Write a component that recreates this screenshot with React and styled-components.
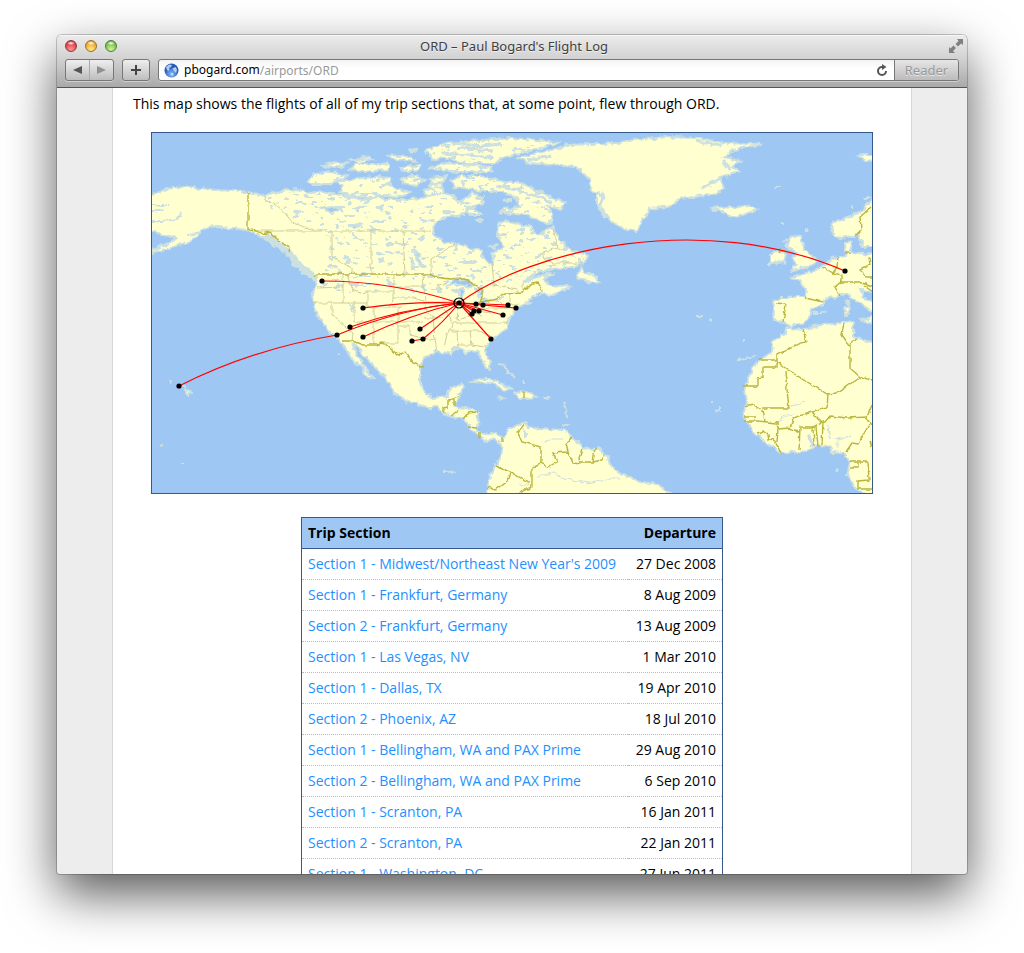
import React from "react";
import styled, { createGlobalStyle } from "styled-components";

const GlobalStyle = createGlobalStyle`
  *, *::before, *::after { box-sizing: border-box; }
  body { margin: 0; background: #fff; overflow: hidden; }
`;

const UI_FONT = `"Noto Sans", "Open Sans", sans-serif`;
const TEXT_FONT = `"Open Sans", "Noto Sans", sans-serif`;

const Desktop = styled.div`
  height: 100vh;
  padding: 35px 57px 79px;
`;

const Window = styled.div`
  display: flex;
  flex-direction: column;
  height: 100%;
  border-radius: 5px 5px 3px 3px;
  overflow: hidden;
  background: #ededed;
  box-shadow: 0 0 0 1px rgba(0, 0, 0, 0.2), 0 20px 50px rgba(0, 0, 0, 0.66);
`;

const Chrome = styled.header`
  flex: none;
  background: linear-gradient(#ececec, #d2d2d2 45%, #a9a9a9);
  border-bottom: 1px solid #555;
  box-shadow: inset 0 1px 0 #f6f6f6;
  font-family: ${UI_FONT};
`;

const TitleBar = styled.div`
  display: grid;
  grid-template-columns: 80px 1fr 80px;
  align-items: center;
  height: 22px;
  padding: 0 4px 0 8px;
`;

const Lights = styled.div`
  display: flex;
  gap: 8px;
`;

const Light = styled.button`
  width: 12px;
  height: 12px;
  padding: 0;
  border: 1px solid ${(p) => p.$edge};
  border-radius: 50%;
  background: radial-gradient(ellipse 4px 2px at 50% 22%, #fff, transparent),
    radial-gradient(circle at 50% 85%, ${(p) => p.$glow}, ${(p) => p.$tone} 75%);
`;

const Title = styled.h1`
  margin: 0;
  text-align: center;
  font-size: 13px;
  line-height: 22px;
  font-weight: 400;
  color: #404040;
  text-shadow: 0 1px 0 rgba(255, 255, 255, 0.6);
`;

const IconButton = styled.button`
  display: flex;
  align-items: center;
  justify-content: center;
  justify-self: end;
  padding: 0;
  border: 0;
  background: none;
`;

const Toolbar = styled.div`
  display: flex;
  gap: 8px;
  height: 30px;
  padding: 2px 8px 6px;
`;

const ButtonGroup = styled.div`
  display: flex;
  width: 49px;
  border: 1px solid #777;
  border-radius: 3px;
  background: linear-gradient(#efefef, #bdbdbd);
  box-shadow: 0 1px 0 rgba(255, 255, 255, 0.4);
`;

const ToolButton = styled.button`
  flex: 1;
  display: flex;
  align-items: center;
  justify-content: center;
  padding: 0;
  border: 0;
  background: none;
  & + & { border-left: 1px solid #aaa; }
`;

const AddGroup = styled(ButtonGroup)`
  width: 28px;
`;

const AddressBar = styled.form`
  flex: 1;
  display: flex;
  align-items: center;
  margin: 0;
  padding-left: 5px;
  border: 1px solid #777;
  border-radius: 3px;
  background: linear-gradient(#f3f3f3, #fff 40%);
  box-shadow: 0 1px 0 rgba(255, 255, 255, 0.4);
  overflow: hidden;
  font-size: 12px;
`;

const Host = styled.label`
  margin-left: 5px;
  line-height: 20px;
  color: #000;
`;

const PathInput = styled.input`
  flex: 1;
  min-width: 0;
  height: 20px;
  padding: 0;
  border: 0;
  outline: 0;
  background: none;
  font: inherit;
  color: #999;
`;

const ReaderButton = styled.button`
  align-self: stretch;
  width: 64px;
  margin-left: 6px;
  padding: 0;
  border: 0;
  border-left: 1px solid #777;
  background: linear-gradient(#e6e6e6, #bcbcbc);
  font-family: inherit;
  font-size: 13px;
  line-height: 18px;
  color: #999;
  text-shadow: 0 1px 0 rgba(255, 255, 255, 0.6);
`;

const Viewport = styled.main`
  flex: 1;
  min-height: 0;
  overflow: hidden;
`;

const Page = styled.div`
  max-width: 800px;
  margin: 0 auto;
  padding: 4px 20px;
  border: solid #d8d8d8;
  border-width: 0 1px;
  background: #fff;
  font-family: ${TEXT_FONT};
  font-size: 14px;
  line-height: 24px;
  color: #000;
`;

const Intro = styled.p`
  margin: 0 0 16px;
`;

const MapFrame = styled.figure`
  max-width: 722px;
  margin: 0 auto 23px;
  border: 1px solid #36598c;
  background: #9fc7f3;
  svg { display: block; width: 100%; height: auto; }
`;

const Trips = styled.table`
  width: 422px;
  margin: 0 auto;
  border: 1px solid #36598c;
  border-collapse: separate;
  border-spacing: 0;
`;

const HeadCell = styled.th`
  height: 31px;
  padding: 0 6px;
  border-bottom: 1px solid #36598c;
  background: #9fc7f3;
  text-align: ${(p) => (p.$end ? "right" : "left")};
  font-weight: 700;
`;

const Cell = styled.td`
  height: 31px;
  padding: 0 6px;
  border-bottom: 1px dotted #bbb;
  text-align: ${(p) => (p.$end ? "right" : "left")};
  white-space: nowrap;
`;

const TripLink = styled.a`
  color: #1e90ff;
  text-decoration: none;
`;

const MAINLAND =
  "M-4 63L8 58L20 55L33 53L48 56L81 58L96 60L113 63L121 59L145 56L158 60L168 59L195 63L211 67L228 65L248 67L271 65L283 60L278 52L288 50L291 60L300 62L308 70L321 60L331 64L331 72L315 75L311 82L295 84L283 90L281 99L291 109L303 110L318 115L330 118L331 125L336 130L341 132L342 124L340 120L350 115L351 110L346 104L347 90L356 88L371 92L380 94L381 100L388 102L395 97L400 94L408 107L415 115L428 120L435 123L431 130L421 134L401 136L388 139L380 144L371 150L383 145L395 140L401 141L391 147L401 154L415 152L418 154L398 163L390 159L380 164L375 169L378 170L365 174L360 182L356 187L356 195L348 200L340 207L333 214L334 222L338 229L338 237L334 235L330 227L326 219L320 218L313 219L308 216L300 216L300 221L285 218L271 225L268 235L268 250L275 262L281 265L295 263L300 253L311 252L310 259L306 264L303 274L315 275L326 279L325 297L331 302L345 300L351 305L356 297L373 289L376 294L388 296L410 297L415 299L421 305L430 314L448 317L456 324L458 332L468 340L488 349L501 350L518 360L518 366L335 366L336 347L343 334L350 320L349 309L341 305L335 309L328 304L318 295L316 290L310 285L300 283L291 280L285 274L275 274L258 269L241 260L238 252L231 242L221 232L211 222L206 214L200 210L205 222L211 232L221 245L215 244L210 234L200 227L193 214L188 207L178 200L168 185L162 174L161 160L165 150L163 144L151 140L145 130L138 120L126 114L115 105L105 101L95 97L71 94L51 95L46 102L35 109L18 115L-4 121L-4 119L18 110L25 105L13 102L-4 97Z";

const ARCTIC = [
  "M156 49L163 40L178 39L195 43L185 49L175 52L161 52Z",
  "M183 47L198 47L211 45L225 44L238 45L241 55L258 59L248 64L235 62L215 65L198 62L188 59L190 54Z",
  "M168 33L185 29L195 30L188 34ZM198 37L205 30L225 32L236 30L236 37L211 39ZM198 27L218 24L221 26L205 29Z",
  "M248 47L261 42L273 47L265 52L253 51ZM278 45L295 43L291 49L280 50ZM271 57L288 54L290 60L275 64Z",
  "M236 22L258 24L265 29L242 27ZM248 34L268 32L265 38L251 38ZM258 18L265 17L264 19Z",
  "M276 35L295 30L341 34L338 39L305 39Z",
  "M273 17L295 10L328 7L361 5L408 9L388 15L368 20L351 24L345 30L315 30L295 25L280 26Z",
  "M300 47L308 43L328 43L345 47L368 50L391 60L413 70L408 76L395 73L401 80L400 90L388 88L375 82L348 80L351 76L368 74L365 65L351 59L335 59L311 55L301 54Z",
  "M314 77L321 75L330 82L320 82ZM323 87L330 87L328 89ZM339 113L345 112L343 115ZM351 67L358 66L358 69Z",
].join("");

const ISLANDS = [
  "M366 25L385 20L408 15L415 12L468 10L481 7L515 4L548 5L571 10L610 11L581 17L571 24L588 27L581 34L588 39L568 44L573 55L565 60L528 66L518 73L498 76L491 87L485 98L468 94L458 87L451 77L445 72L445 60L440 57L438 47L425 34L375 30Z",
  "M561 75L571 74L581 75L598 72L605 77L585 84L571 80Z",
  "M425 144L430 134L433 140L446 144L448 150L435 149Z",
  "M638 105L648 102L650 109L653 117L665 127L661 132L638 139L645 132L640 125L645 120L635 115Z",
  "M618 122L626 117L635 120L633 129L618 131Z",
  "M320 249L328 245L343 247L361 257L348 256L341 250Z",
  "M365 265L363 260L378 259L385 264L373 265ZM346 264L354 265L350 266ZM391 265L397 265L396 266Z",
  "M708 186L722 184L719 190ZM692 174L697 173L696 182L693 182ZM694 168L697 167L696 171Z",
  "M34 257L38 258L39 260L36 262ZM704 22L722 22L722 28L714 27Z",
].join("");

const EUROPE =
  "M724 62L711 77L695 85L680 90L681 104L690 105L706 102L711 114L724 114ZM724 120L706 121L698 119L700 109L693 110L694 123L681 125L670 134L661 139L653 140L640 144L648 149L655 157L653 164L628 164L623 167L621 187L631 189L638 193L651 190L658 184L660 177L671 170L671 167L686 163L695 160L701 166L718 177L724 178L724 170L711 164L708 156L724 161Z";

const AFRICA =
  "M635 195L651 197L661 193L691 190L701 189L701 204L724 210L724 366L706 358L695 342L698 330L691 319L681 320L678 314L668 312L651 319L628 320L615 310L605 302L595 290L590 280L595 270L593 254L601 235L608 227L620 219L621 209L633 200Z";

const LAND = MAINLAND + ARCTIC + ISLANDS + EUROPE + AFRICA;

const SHOALS = [
  "M18 249h3M30 253l4 2M8 311l2 2M29 330h3M186 222h2M292 338h6l4 2M354 235l2 6M346 231l6 1 5 8 6 4M371 248v3M412 269l2 8 1 8M410 292h8M545 183h6M557 187h3M590 207h3M587 225v3l6-2 6-1 5-3M558 269h2M568 274v3l-6 1M622 54h7M630 89h3M653 96h2v2M632 108l4-3M661 180h8l6-2M683 337h3M700 72v3M710 65h8M638 118l-5-5 3-4",
  "M0 72h16M0 78h12M0 88h10l14-1 5-9M36 102l12-3M60 92l12 2M0 115l10-3",
].join("");

const NATIONS = [
  "M96 60V97L101 96L110 101L118 99L128 109L138 114L137 119M162 144L166 141H278L283 144L298 146L308 145L318 149L330 156L330 164L328 169L341 167L353 160L371 159L380 150L386 149L390 158",
  "M190 208H200L211 212H225L228 210L233 211L246 222L253 219L261 230L271 234",
  "M308 264L296 267V274L291 275V280M302 266V274M308 277L299 283M311 286L316 280L326 279M316 294L325 295M327 299V305M372 259V265M350 304V309",
  "M373 290L366 300L370 309L389 314V330L396 334L405 329L401 320L416 319L414 311L420 304M416 319L421 330L428 331L427 325L430 317M428 329H441L443 315M441 329L450 327L453 321M389 330L380 334V354L368 359M343 333L358 339L378 350M358 340L355 348L343 357L336 354",
  "M651 197L654 209L648 210L625 222V234H611V244L606 245V253H590M606 227H625M625 229L636 237L675 261L685 260L708 244L720 247M633 238L637 275H611L613 289",
  "M593 273L601 271L611 279M592 284H604M592 288H606L625 290L626 296M676 261L675 275L660 279L641 285L638 295L626 296L625 309M660 279L670 289L661 294H648L647 318M638 295L647 299M605 300L611 298L616 302L617 308L621 305L629 320M661 294L662 313M664 293L666 313M671 289L670 312",
  "M667 289H673L678 283L695 285L715 284L718 290L706 311L700 310L694 319M692 190L690 202L697 212L705 206M698 212V235L708 244M715 284L720 272M698 329H716L717 347L706 348V356H720M698 334H706V329M714 284L720 292M720 315L718 308",
  "M624 170L634 171L631 189M653 165L671 169M686 124L685 134L681 140L690 142V148L683 154L688 163M670 134L681 140M690 149L708 149L720 154M717 124L718 132L708 137L715 144H720M719 74L708 84L709 97L703 103M626 120L628 117L635 120M712 153L720 158M693 120H698",
].join("");

const PROVINCES = [
  "M101 98H279M180 98V124L200 135V141M219 98V141M251 98L253 141M279 141V126L303 111M340 130L342 152L365 156M113 63L114 69L122 70L130 77L141 90L153 94L163 97M400 97L406 115L391 119V125L401 130H430",
  "M165 155L191 154M191 141V170M162 170H215M195 142L201 157L208 160L215 159V174H250M215 159H242M242 141V167M242 154H273M242 165H262L277 170M271 141L273 169H300M180 170V182L201 200L200 208M202 170V189H271M222 174V212M246 174V210H228M246 193H258V202L271 205L283 207",
  "M236 174L242 167M271 185L281 185L283 207L285 218M273 175L281 185H291M273 169V175M289 156L286 152L296 150M291 175L298 184L301 193L295 201L292 215M306 176L305 187L316 184L323 180L330 182M301 190H356M296 198H328M305 198L306 215M318 198L320 212L334 214M328 198L340 205M317 174V184M331 172V179L340 180M331 175H356M342 167L356 175M358 160V172H366M365 156V160M371 150V160M305 212H320",
].join("");

const LAKES =
  "M296 152L303 147L308 145L322 151L318 154L308 152ZM307 157L311 156L310 168L307 170ZM322 154L331 157L328 164L324 160ZM326 170L338 166L335 170ZM341 166L349 164L347 166ZM262 117L266 121L270 133L267 131ZM258 124L262 130L260 131ZM168 75L184 74L190 78L178 79ZM196 92L210 91L203 95ZM372 298L374 301L372 303ZM198 173L202 175L201 178ZM655 301L660 308L660 313Z";

const RIVERS =
  "M385 344L400 340L415 346L435 350L455 346L468 346M378 350L368 353M391 309L400 306L412 306M625 289L635 283L642 281M640 273L654 269M676 292L677 304L689 306L700 302M686 306V316";

const HUB = [307, 170];
const ROUTES = [
  "M307 170C380 116 552 77 693 138",
  "M307 170Q240 148 170 148",
  "M307 170Q260 168 211 175",
  "M307 170Q250 176 198 194",
  "M307 170Q245 177 185 202",
  "M307 170Q260 181 211 204",
  "M185 202Q100 216 27 253",
  "M307 170L268 196",
  "M307 170Q291 190 271 206",
  "M271 206L260 208",
  "M307 170L339 206",
  "M307 170L351 182",
  "M307 170L364 175",
  "M307 170L356 172",
  "M307 170L324 171",
  "M307 170L327 178",
  "M307 170L322 178",
  "M307 170L320 181",
];

const AIRPORTS = [
  HUB, [170, 148], [211, 175], [198, 194], [185, 202], [211, 204], [27, 253],
  [268, 196], [260, 208], [271, 206], [324, 171], [331, 172], [356, 172],
  [364, 175], [351, 182], [327, 178], [322, 178], [320, 181], [339, 206],
  [693, 138],
];

function FlightMap() {
  return (
    <svg viewBox="0 0 720 360" role="img" aria-label="Map of flights through ORD">
      <defs>
        <filter id="rough" x="0" y="0" width="720" height="360" filterUnits="userSpaceOnUse">
          <feTurbulence type="fractalNoise" baseFrequency="0.16" numOctaves="3" seed="4" />
          <feDisplacementMap in="SourceGraphic" scale="6" xChannelSelector="R" yChannelSelector="G" />
        </filter>
        <filter id="border-rough" x="0" y="0" width="720" height="360" filterUnits="userSpaceOnUse">
          <feTurbulence type="fractalNoise" baseFrequency="0.16" numOctaves="2" seed="9" />
          <feDisplacementMap in="SourceGraphic" scale="4" xChannelSelector="R" yChannelSelector="G" />
        </filter>
        <filter id="ponds" x="0" y="0" width="720" height="360" filterUnits="userSpaceOnUse" colorInterpolationFilters="sRGB">
          <feTurbulence type="fractalNoise" baseFrequency="0.12 0.22" numOctaves="3" seed="12" />
          <feColorMatrix values="0 0 0 0 0.8  0 0 0 0 0.88  0 0 0 0 0.88  26 0 0 0 -16.2" result="specks" />
          <feComposite in="specks" in2="SourceAlpha" operator="in" />
        </filter>
        <clipPath id="north">
          <path d={MAINLAND + ARCTIC} />
        </clipPath>
      </defs>
      <rect width="720" height="360" fill="#9fc7f3" />
      <g filter="url(#rough)">
        <path d={LAND} fill="#ffffd0" stroke="#cce0e0" strokeWidth="2" />
        <path d="M113 103L126 111L139 121L144 130L154 138L164 145" fill="none" stroke="#cce0e0" strokeWidth="7" />
        <path d="M445 58L451 64L447 74L455 86M568 46L560 50L550 56M571 27L578 37M561 76L571 79M375 27L400 23M545 8L570 13M680 92L682 102M300 10L330 13L350 11M290 20L340 24M310 15L340 18M345 53L370 58L400 70" fill="none" stroke="#cce0e0" strokeWidth="3" />
        <path d={SHOALS} fill="none" stroke="#cce0e0" strokeWidth="2" />
        <path d={LAKES} fill="#9fc7f3" stroke="#cce0e0" strokeWidth="2" />
        <path d={RIVERS} fill="none" stroke="#cce0e0" />
      </g>
      <g clipPath="url(#north)">
        <path d="M113 55L160 40L270 5H400L420 80L436 125L395 150L350 150L340 160H166L180 105L120 80Z" filter="url(#ponds)" />
      </g>
      <path d={PROVINCES} fill="none" stroke="#cfcd9a" filter="url(#border-rough)" />
      <path d={NATIONS} fill="none" stroke="#b9b53d" strokeWidth="1.4" filter="url(#border-rough)" />
      {ROUTES.map((d) => (
        <path key={d} d={d} fill="none" stroke="#f00" strokeWidth="1.2" />
      ))}
      {AIRPORTS.map(([x, y]) => (
        <circle key={`${x}-${y}`} cx={x} cy={y} r="2.6" />
      ))}
      <circle cx={HUB[0]} cy={HUB[1]} r="5" fill="none" stroke="#000" strokeWidth="1.2" />
    </svg>
  );
}

const Globe = () => (
  <svg width="15" height="15" viewBox="0 0 15 15" aria-hidden="true">
    <defs>
      <radialGradient id="globe" cx="50%" cy="75%">
        <stop offset="0" stopColor="#8cc4f8" />
        <stop offset="1" stopColor="#2858b8" />
      </radialGradient>
    </defs>
    <circle cx="7.500" cy="7.500" r="7" fill="url(#globe)" />
    <path d="M2 4L5 1.500L8 2L7 4L5 5L5.500 7L4 8L2.500 6ZM9 5L12 4L13 7L12 10L10 8L8.500 6ZM7 10L9 10L9.500 12L7.500 13Z" fill="#d0e6fb" opacity=".8" />
  </svg>
);

const TRIPS = [
  ["Section 1 - Midwest/Northeast New Year's 2009", "27 Dec 2008"],
  ["Section 1 - Frankfurt, Germany", "8 Aug 2009"],
  ["Section 2 - Frankfurt, Germany", "13 Aug 2009"],
  ["Section 1 - Las Vegas, NV", "1 Mar 2010"],
  ["Section 1 - Dallas, TX", "19 Apr 2010"],
  ["Section 2 - Phoenix, AZ", "18 Jul 2010"],
  ["Section 1 - Bellingham, WA and PAX Prime", "29 Aug 2010"],
  ["Section 2 - Bellingham, WA and PAX Prime", "6 Sep 2010"],
  ["Section 1 - Scranton, PA", "16 Jan 2011"],
  ["Section 2 - Scranton, PA", "22 Jan 2011"],
  ["Section 1 - Washington, DC", "27 Jun 2011"],
];

export default function App() {
  return (
    <Desktop>
      <GlobalStyle />
      <Window>
        <Chrome>
          <TitleBar>
            <Lights>
              <Light aria-label="Close" $edge="#8f3a3c" $tone="#d9303c" $glow="#ff9a9a" />
              <Light aria-label="Minimize" $edge="#98702f" $tone="#e8a028" $glow="#ffe98a" />
              <Light aria-label="Zoom" $edge="#4f7d3a" $tone="#68b440" $glow="#d2f59a" />
            </Lights>
            <Title>ORD – Paul Bogard's Flight Log</Title>
            <IconButton aria-label="Full screen">
              <svg width="14" height="14" viewBox="0 0 14 14" fill="#808080" aria-hidden="true">
                <path d="M8 0H14V6L12 4.500L9 7.500L6.500 5L9.500 2ZM0 8L1.500 9.500L4.500 6.500L7 9L4 12L6 14H0Z" />
              </svg>
            </IconButton>
          </TitleBar>
          <Toolbar>
            <ButtonGroup>
              <ToolButton aria-label="Back">
                <svg width="9" height="10" viewBox="0 0 9 10" aria-hidden="true"><path d="M0 5L9 1V9Z" fill="#555" /></svg>
              </ToolButton>
              <ToolButton aria-label="Forward">
                <svg width="9" height="10" viewBox="0 0 9 10" aria-hidden="true"><path d="M9 5L0 1V9Z" fill="#909090" /></svg>
              </ToolButton>
            </ButtonGroup>
            <AddGroup>
              <ToolButton aria-label="Add bookmark">
                <svg width="10" height="10" viewBox="0 0 10 10" aria-hidden="true"><path d="M4 0H6V4H10V6H6V10H4V6H0V4H4Z" fill="#444" /></svg>
              </ToolButton>
            </AddGroup>
            <AddressBar onSubmit={(e) => e.preventDefault()}>
              <Globe />
              <Host htmlFor="path">pbogard.com</Host>
              <PathInput id="path" type="text" defaultValue="/airports/ORD" />
              <IconButton type="button" aria-label="Reload">
                <svg width="12" height="13" viewBox="0 0 12 13" aria-hidden="true">
                  <path d="M10 7A4 4 0 1 1 6 3H7" fill="none" stroke="#555" strokeWidth="2" />
                  <path d="M6 0L10.500 3L6 6Z" fill="#555" />
                </svg>
              </IconButton>
              <ReaderButton type="button">Reader</ReaderButton>
            </AddressBar>
          </Toolbar>
        </Chrome>
        <Viewport>
          <Page>
            <Intro>This map shows the flights of all of my trip sections that, at some point, flew through ORD.</Intro>
            <MapFrame><FlightMap /></MapFrame>
            <Trips>
              <thead>
                <tr>
                  <HeadCell scope="col">Trip Section</HeadCell>
                  <HeadCell scope="col" $end>Departure</HeadCell>
                </tr>
              </thead>
              <tbody>
                {TRIPS.map(([name, date]) => (
                  <tr key={name}>
                    <Cell><TripLink href="#trip">{name}</TripLink></Cell>
                    <Cell $end>{date}</Cell>
                  </tr>
                ))}
              </tbody>
            </Trips>
          </Page>
        </Viewport>
      </Window>
    </Desktop>
  );
}
